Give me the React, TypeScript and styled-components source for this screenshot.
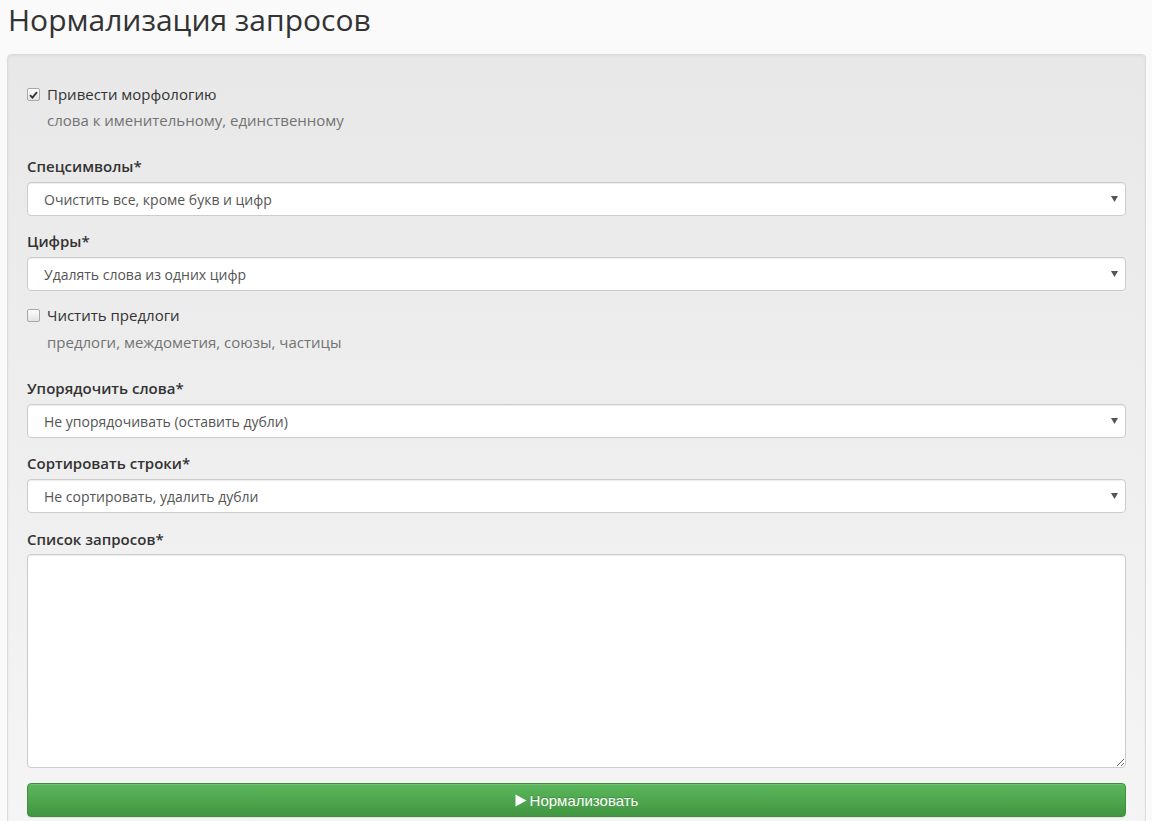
import React from "react";
import styled, { createGlobalStyle } from "styled-components";

const GlobalStyle = createGlobalStyle`
  html, body {
    margin: 0;
    padding: 0;
    background: #fafafa;
  }
  body {
    font-family: "Open Sans", "Liberation Sans", Arial, sans-serif;
    font-size: 14px;
    line-height: 20px;
    color: #333;
  }
  * { box-sizing: border-box; }
`;

const Page = styled.div`
  padding: 3px 6px 0 7px;
`;

const Title = styled.h1`
  margin: 0 0 0 1px;
  font-family: "Open Sans", sans-serif;
  font-weight: 400;
  font-size: 30px;
  line-height: 33px;
  color: #333;
`;

const Panel = styled.div`
  margin-top: 18px;
  padding: 19px;
  border: 1px solid #dcdcdc;
  border-radius: 4px;
  background: linear-gradient(to bottom, #e8e8e8 0%, #f5f5f5 100%);
  box-shadow: inset 0 1px 3px rgba(0, 0, 0, 0.05), 0 1px 0 rgba(255, 255, 255, 0.1);
  display: flex;
  flex-direction: column;
`;

const CheckRow = styled.label<{ $mt: number }>`
  margin-top: ${(p) => p.$mt}px;
  display: flex;
  align-items: center;
  height: 20px;
  font-size: 15px;
  color: #333;
  cursor: pointer;
`;

const CheckBox = styled.span`
  width: 13px;
  height: 13px;
  margin-right: 7px;
  margin-top: 1px;
  flex: none;
  border: 1px solid #a9a9a9;
  border-radius: 2px;
  background: linear-gradient(to bottom, #fdfdfd, #e3e3e3);
  display: flex;
  align-items: center;
  justify-content: center;
`;

const Help = styled.div<{ $mt: number }>`
  margin-top: ${(p) => p.$mt}px;
  padding-left: 20px;
  height: 20px;
  font-size: 15px;
  color: #737373;
`;

const Label = styled.div<{ $mt: number }>`
  margin-top: ${(p) => p.$mt}px;
  height: 20px;
  font-weight: 600;
  font-size: 15px;
  color: #333;
`;

const SelectWrap = styled.div<{ $mt: number }>`
  margin-top: ${(p) => p.$mt}px;
  position: relative;
  height: 34px;
`;

const Select = styled.select`
  appearance: none;
  -webkit-appearance: none;
  width: 100%;
  height: 34px;
  padding: 0 30px 0 16px;
  border: 1px solid #ccc;
  border-radius: 4px;
  background: #fff;
  font-family: "Open Sans", sans-serif;
  font-size: 14px;
  color: #555;
  box-shadow: inset 0 1px 1px rgba(0, 0, 0, 0.075);
  outline: none;
`;

const Arrow = styled.svg`
  position: absolute;
  right: 8px;
  top: 14px;
  pointer-events: none;
`;

const TextArea = styled.textarea<{ $mt: number }>`
  margin-top: ${(p) => p.$mt}px;
  display: block;
  width: 100%;
  height: 214px;
  border: 1px solid #ccc;
  border-radius: 4px;
  background: #fff;
  box-shadow: inset 0 1px 1px rgba(0, 0, 0, 0.075);
  font-family: "Open Sans", sans-serif;
  font-size: 14px;
  padding: 6px 12px;
  outline: none;
  resize: vertical;
`;

const Button = styled.button<{ $mt: number }>`
  margin-top: ${(p) => p.$mt}px;
  height: 34px;
  width: 100%;
  border: 1px solid #3e8f3e;
  border-radius: 4px;
  background: linear-gradient(to bottom, #5cb85c 0%, #419641 100%);
  box-shadow: inset 0 1px 0 rgba(255, 255, 255, 0.15), 0 1px 1px rgba(0, 0, 0, 0.075);
  color: #fff;
  font-family: "Liberation Sans", Arial, sans-serif;
  font-size: 15px;
  text-shadow: 0 -1px 0 rgba(0, 0, 0, 0.2);
  cursor: pointer;
  display: flex;
  align-items: center;
  justify-content: center;
  gap: 3px;
`;

const Play = styled.svg`
  display: block;
`;

const Check = ({ checked }: { checked?: boolean }) => (
  <CheckBox>
    {checked && (
      <svg width="9" height="8" viewBox="0 0 9 8">
        <path d="M1 4.2 L3.4 6.6 L8 1.2" fill="none" stroke="#333" strokeWidth="1.8" />
      </svg>
    )}
  </CheckBox>
);

const SelectField = ({ mt, value }: { mt: number; value: string }) => (
  <SelectWrap $mt={mt}>
    <Select defaultValue={value}>
      <option>{value}</option>
    </Select>
    <Arrow width="7" height="6" viewBox="0 0 7 6">
      <path d="M0 0 H7 L3.5 6 Z" fill="#555" />
    </Arrow>
  </SelectWrap>
);

export default function App() {
  return (
    <>
      <GlobalStyle />
      <Page>
        <Title>Нормализация запросов</Title>
        <Panel>
          <CheckRow $mt={10}>
            <Check checked />
            Привести морфологию
          </CheckRow>
          <Help $mt={6}>слова к именительному, единственному</Help>

          <Label $mt={26}>Спецсимволы*</Label>
          <SelectField mt={6} value="Очистить все, кроме букв и цифр" />

          <Label $mt={15}>Цифры*</Label>
          <SelectField mt={6} value="Удалять слова из одних цифр" />

          <CheckRow $mt={14}>
            <Check />
            Чистить предлоги
          </CheckRow>
          <Help $mt={7}>предлоги, междометия, союзы, частицы</Help>

          <Label $mt={26}>Упорядочить слова*</Label>
          <SelectField mt={6} value="Не упорядочивать (оставить дубли)" />

          <Label $mt={15}>Сортировать строки*</Label>
          <SelectField mt={6} value="Не сортировать, удалить дубли" />

          <Label $mt={16}>Список запросов*</Label>
          <TextArea $mt={5} />

          <Button $mt={15}>
            <Play width="12" height="13" viewBox="0 0 12 13">
              <path d="M0.5 0.5 L11.5 6.5 L0.5 12.5 Z" fill="#fff" />
            </Play>
            <span>Нормализовать</span>
          </Button>
        </Panel>
      </Page>
    </>
  );
}
